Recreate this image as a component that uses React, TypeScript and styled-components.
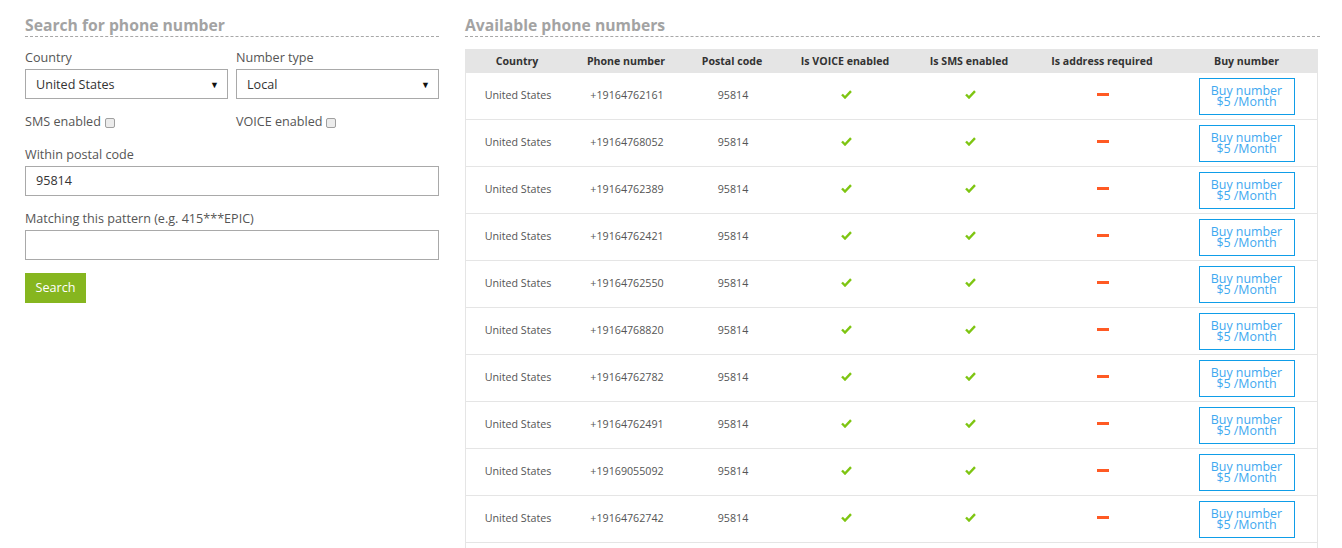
import React from "react";
import styled, { createGlobalStyle } from "styled-components";

const Global = createGlobalStyle`
  html, body { margin: 0; padding: 0; overflow: hidden; background: #fff; }
  body { font-family: "Open Sans", "Liberation Sans", sans-serif; color: #555; }
  * { box-sizing: border-box; }
`;

const Page = styled.div`
  display: grid;
  grid-template-columns: 414px 855px;
  column-gap: 26px;
  padding: 15px 22px 0 25px;
  align-items: start;
`;

const Column = styled.section`
  display: flex;
  flex-direction: column;
`;

const Title = styled.h2`
  margin: 0;
  font-size: 15.7px;
  line-height: 20px;
  font-weight: 700;
  color: #a3a3a3;
  padding: 0 0 1px 0;
  border-bottom: 1px dashed #a8a8a8;
`;

const Form = styled.form`
  display: flex;
  flex-direction: column;
  padding-top: 11px;
`;

const TwoCols = styled.div<{ $mb?: number }>`
  display: grid;
  grid-template-columns: 203px 203px;
  column-gap: 8px;
  margin-bottom: ${(p) => p.$mb ?? 0}px;
`;

const Field = styled.div<{ $mb?: number }>`
  display: flex;
  flex-direction: column;
  gap: 2px;
  margin-bottom: ${(p) => p.$mb ?? 0}px;
`;

const Label = styled.label`
  font-size: 12.6px;
  line-height: 19px;
  color: #555;
`;

const SelectBox = styled.div`
  display: flex;
  align-items: center;
  height: 30px;
  border: 1px solid #a9a9a9;
  background: #fff;
  padding: 0 8px 0 10px;
`;

const SelectText = styled.span`
  flex: 1;
  font-size: 12.6px;
  color: #333;
`;

const Arrow = styled.span`
  font-size: 9px;
  color: #111;
  line-height: 1;
  padding-top: 1px;
`;

const CheckRow = styled.label`
  display: flex;
  align-items: center;
  gap: 4px;
  font-size: 12.6px;
  line-height: 18px;
  padding-top: 1px;
  color: #555;
`;

const Check = styled.input`
  appearance: none;
  margin: 2px 0 0 0;
  width: 10px;
  height: 10px;
  border: 1px solid #a0a0a0;
  border-radius: 2px;
  background: #ececec;
`;

const TextInput = styled.input`
  height: 30px;
  border: 1px solid #a9a9a9;
  padding: 0 10px 1px;
  font-family: inherit;
  font-size: 12.6px;
  color: #333;
  outline: none;
`;

const SearchButton = styled.button`
  align-self: flex-start;
  width: 61px;
  height: 30px;
  border: none;
  background: #86b61f;
  color: #fff;
  font-family: inherit;
  font-size: 12.6px;
  padding: 0 0 2px 0;
`;

const Table = styled.div`
  margin-top: 12px;
  width: 853px;
  display: flex;
  flex-direction: column;
`;

const cols = "104px 114px 98px 128px 120px 146px 143px";

const HeadRow = styled.div`
  display: grid;
  grid-template-columns: ${cols};
  height: 24px;
  background: #e5e5e5;
  align-items: center;
  padding-bottom: 1px;
`;

const HeadCell = styled.div`
  text-align: center;
  font-size: 10.6px;
  line-height: 14px;
  font-weight: 700;
  color: #333;
`;

const Row = styled.div`
  display: grid;
  grid-template-columns: ${cols};
  height: 47px;
  align-items: center;
  padding-bottom: 3px;
  border-left: 1px solid #e5e5e5;
  border-right: 1px solid #e5e5e5;
  border-bottom: 1px solid #e5e5e5;
`;

const Cell = styled.div`
  display: flex;
  justify-content: center;
  align-items: center;
  font-size: 10.7px;
  line-height: 14px;
  color: #555;
`;

const ButtonCell = styled(Cell)`
  margin-bottom: -3px;
  padding-right: 2px;
`;

const Dash = styled.span`
  display: block;
  width: 12px;
  height: 3px;
  background: #ff5a24;
`;

const BuyButton = styled.button`
  width: 96px;
  height: 37px;
  border: 1px solid #0f9de8;
  background: #fff;
  color: #3ea8f0;
  font-family: inherit;
  font-size: 12.4px;
  line-height: 10.5px;
  padding: 1px 0 0 0;
  display: flex;
  flex-direction: column;
  align-items: center;
  justify-content: center;
`;

const CheckIcon = () => (
  <svg width="11" height="9" viewBox="0 0 11 9">
    <polyline
      points="1,4.5 4,7.5 10,1.2"
      fill="none"
      stroke="#7ec512"
      strokeWidth="2.4"
    />
  </svg>
);

const numbers = [
  "+19164762161",
  "+19164768052",
  "+19164762389",
  "+19164762421",
  "+19164762550",
  "+19164768820",
  "+19164762782",
  "+19164762491",
  "+19169055092",
  "+19164762742",
  "+19164762387",
];

const headers = [
  "Country",
  "Phone number",
  "Postal code",
  "Is VOICE enabled",
  "Is SMS enabled",
  "Is address required",
  "Buy number",
];

export default function App() {
  return (
    <>
      <Global />
      <Page>
        <Column>
          <Title>Search for phone number</Title>
          <Form onSubmit={(e) => e.preventDefault()}>
            <TwoCols $mb={13}>
              <Field>
                <Label>Country</Label>
                <SelectBox>
                  <SelectText>United States</SelectText>
                  <Arrow>▼</Arrow>
                </SelectBox>
              </Field>
              <Field>
                <Label>Number type</Label>
                <SelectBox>
                  <SelectText>Local</SelectText>
                  <Arrow>▼</Arrow>
                </SelectBox>
              </Field>
            </TwoCols>
            <TwoCols $mb={14}>
              <CheckRow>
                SMS enabled <Check type="checkbox" />
              </CheckRow>
              <CheckRow>
                VOICE enabled <Check type="checkbox" />
              </CheckRow>
            </TwoCols>
            <Field $mb={13}>
              <Label>Within postal code</Label>
              <TextInput defaultValue="95814" />
            </Field>
            <Field $mb={13}>
              <Label>Matching this pattern (e.g. 415***EPIC)</Label>
              <TextInput />
            </Field>
            <SearchButton type="submit">Search</SearchButton>
          </Form>
        </Column>
        <Column>
          <Title>Available phone numbers</Title>
          <Table>
            <HeadRow>
              {headers.map((h) => (
                <HeadCell key={h}>{h}</HeadCell>
              ))}
            </HeadRow>
            {numbers.map((n) => (
              <Row key={n}>
                <Cell>United States</Cell>
                <Cell>{n}</Cell>
                <Cell>95814</Cell>
                <Cell>
                  <CheckIcon />
                </Cell>
                <Cell>
                  <CheckIcon />
                </Cell>
                <Cell>
                  <Dash />
                </Cell>
                <ButtonCell>
                  <BuyButton>
                    <span>Buy number</span>
                    <span>$5 /Month</span>
                  </BuyButton>
                </ButtonCell>
              </Row>
            ))}
          </Table>
        </Column>
      </Page>
    </>
  );
}
